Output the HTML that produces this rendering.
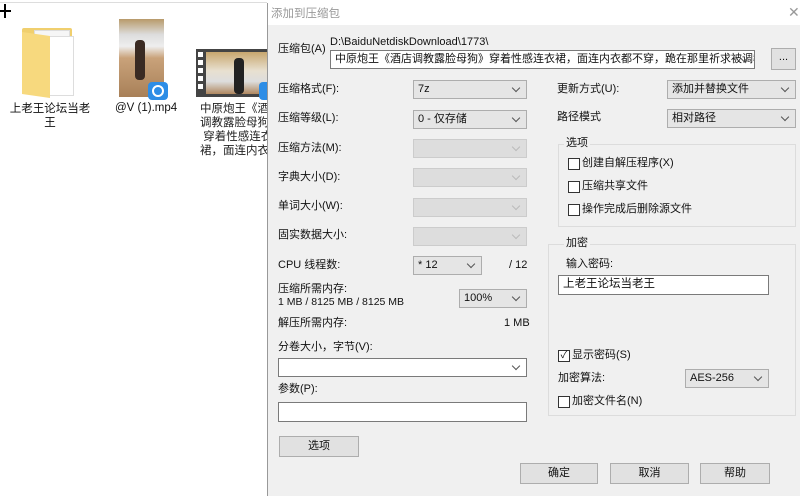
<!DOCTYPE html>
<html><head><meta charset="utf-8"><style>
*{margin:0;padding:0;box-sizing:border-box}
body{width:800px;height:496px;overflow:hidden;background:#fff;position:relative;font-family:"Liberation Sans","Noto Sans CJK SC",sans-serif;font-size:11px;color:#111}
.a{position:absolute;white-space:nowrap;line-height:13px}
.cb{position:absolute;height:19px;border:1px solid #adadad;background:#e5e5e5;padding-left:4px;line-height:13px;padding-top:2px;white-space:nowrap}
.cb.d{background:#ddd;border-color:#ccc}
.cb.w{background:#fff;border-color:#7a7a7a}
.cb::after{content:"";position:absolute;right:7px;top:4px;width:5px;height:5px;border-right:1px solid #555;border-bottom:1px solid #555;transform:rotate(45deg)}
.cb.d::after{border-color:#bbb}
.in{position:absolute;background:#fff;border:1px solid #7a7a7a;height:19px;padding-left:4px;line-height:13px;padding-top:2px}
.bt{position:absolute;background:#e1e1e1;border:1px solid #adadad;text-align:center;line-height:19px;height:21px}
.gb{position:absolute;border:1px solid #dcdcdc}
.gl{position:absolute;background:#f0f0f0;padding:0 2px;line-height:13px}
.ck{position:absolute;width:12px;height:12px;border:1px solid #333;background:#fff}
</style></head><body>
<div class="a" style="left:0;top:2px;width:267px;height:1px;background:#ddd"></div>
<div class="a" style="left:0;top:10px;width:11px;height:2px;background:#000"></div>
<div class="a" style="left:4px;top:4px;width:2px;height:14px;background:#000"></div>
<!-- folder -->
<div class="a" style="left:22px;top:28px;width:50px;height:66px;background:#f0cf6e;border-radius:2px"></div>
<div class="a" style="left:34px;top:30px;width:36px;height:62px;background:#f6f6f6;border:1px solid #ddd"></div>
<div class="a" style="left:44px;top:36px;width:30px;height:60px;background:#fff;border:1px solid #ddd"></div>
<div class="a" style="left:22px;top:34px;width:28px;height:62px;background:#f7d97e;transform:skewY(8deg)"></div>
<div class="a" style="left:8px;top:102px;width:84px;text-align:center;white-space:normal;line-height:14px;font-size:11.5px">上老王论坛当老王</div>
<!-- video1 -->
<div class="a" style="left:119px;top:19px;width:45px;height:78px;background:linear-gradient(#b89a6a 0,#ddd 20%,#eee 35%,#c9a27a 50%,#a88058 100%)"></div>
<div class="a" style="left:135px;top:40px;width:10px;height:40px;background:#3a2a22;border-radius:4px"></div>
<div class="a" style="left:148px;top:82px;width:20px;height:18px;background:#2d8de6;border-radius:4px"></div>
<div class="a" style="left:152px;top:85px;width:12px;height:12px;border:2px solid #fff;border-radius:50%"></div>
<div class="a" style="left:115px;top:102px;font-size:11.5px">@V (1).mp4</div>
<!-- video2 -->
<div class="a" style="left:196px;top:49px;width:71px;height:48px;background:#444"></div>
<div class="a" style="left:206px;top:52px;width:61px;height:42px;background:linear-gradient(#c8a76e,#e8e0d0 45%,#ddd 70%,#b08860)"></div>
<div class="a" style="left:234px;top:58px;width:10px;height:36px;background:#222;border-radius:4px"></div>
<div class="a" style="left:198px;top:52px;width:5px;height:40px;background:repeating-linear-gradient(#fff 0 5px,#444 5px 8px)"></div>
<div class="a" style="left:259px;top:82px;width:10px;height:18px;background:#2d8de6;border-radius:4px 0 0 4px"></div>
<div class="a" style="left:200px;top:102px;width:67px;overflow:hidden;line-height:14px;font-size:11.5px;color:#222">中原炮王《酒店<br>调教露脸母狗》<br>&nbsp;穿着性感连衣<br>裙，面连内衣…</div>
<!-- dialog -->
<div class="a" style="left:267px;top:3px;width:533px;height:493px;background:#f0f0f0;border-left:1px solid #999"></div>
<div class="a" style="left:268px;top:3px;width:532px;height:22px;background:#fff"></div>
<div class="a" style="left:271px;top:8px;color:#999;font-size:11.5px">添加到压缩包</div>
<div class="a" style="left:788px;top:6px;color:#999;font-size:14px">✕</div>
<div class="a" style="left:278px;top:43px">压缩包(A)</div>
<div class="a" style="left:330px;top:36px">D:\BaiduNetdiskDownload\1773\</div>
<div class="cb w" style="left:330px;top:50px;width:425px;overflow:hidden;padding-right:20px">中原炮王《酒店调教露脸母狗》穿着性感连衣裙，面连内衣都不穿，跪在那里祈求被调教</div>
<div class="bt" style="left:771px;top:48px;width:25px;height:22px;line-height:16px">...</div>
<div class="a" style="left:278px;top:83px">压缩格式(F):</div>
<div class="a" style="left:278px;top:112px">压缩等级(L):</div>
<div class="a" style="left:278px;top:142px">压缩方法(M):</div>
<div class="a" style="left:278px;top:171px">字典大小(D):</div>
<div class="a" style="left:278px;top:200px">单词大小(W):</div>
<div class="a" style="left:278px;top:229px">固实数据大小:</div>
<div class="a" style="left:278px;top:259px">CPU 线程数:</div>
<div class="a" style="left:278px;top:283px">压缩所需内存:</div>
<div class="a" style="left:278px;top:296px;font-size:10.5px">1 MB / 8125 MB / 8125 MB</div>
<div class="a" style="left:278px;top:317px">解压所需内存:</div>
<div class="a" style="left:504px;top:317px">1 MB</div>
<div class="a" style="left:278px;top:341px">分卷大小，字节(V):</div>
<div class="a" style="left:278px;top:383px">参数(P):</div>
<div class="cb" style="left:413px;top:80px;width:114px">7z</div>
<div class="cb" style="left:413px;top:110px;width:114px">0 - 仅存储</div>
<div class="cb d" style="left:413px;top:139px;width:114px"></div>
<div class="cb d" style="left:413px;top:168px;width:114px"></div>
<div class="cb d" style="left:413px;top:198px;width:114px"></div>
<div class="cb d" style="left:413px;top:227px;width:114px"></div>
<div class="cb" style="left:413px;top:256px;width:69px">* 12</div>
<div class="a" style="left:509px;top:259px">/ 12</div>
<div class="cb" style="left:459px;top:289px;width:68px">100%</div>
<div class="cb w" style="left:278px;top:358px;width:249px"></div>
<div class="in" style="left:278px;top:402px;width:249px;height:20px"></div>
<div class="bt" style="left:279px;top:436px;width:80px">选项</div>
<div class="a" style="left:557px;top:83px">更新方式(U):</div>
<div class="a" style="left:557px;top:111px">路径模式</div>
<div class="cb" style="left:667px;top:80px;width:129px">添加并替换文件</div>
<div class="cb" style="left:667px;top:109px;width:129px">相对路径</div>
<div class="gb" style="left:558px;top:144px;width:238px;height:83px"></div>
<div class="gl" style="left:564px;top:137px">选项</div>
<div class="ck" style="left:568px;top:158px"></div><div class="a" style="left:582px;top:157px">创建自解压程序(X)</div>
<div class="ck" style="left:568px;top:181px"></div><div class="a" style="left:582px;top:180px">压缩共享文件</div>
<div class="ck" style="left:568px;top:204px"></div><div class="a" style="left:582px;top:203px">操作完成后删除源文件</div>
<div class="gb" style="left:548px;top:244px;width:248px;height:172px"></div>
<div class="gl" style="left:564px;top:237px">加密</div>
<div class="a" style="left:566px;top:258px">输入密码:</div>
<div class="in" style="left:558px;top:275px;width:211px;height:20px;font-size:11.5px">上老王论坛当老王</div>
<div class="ck" style="left:558px;top:350px;font-size:10px;line-height:10px;text-align:center">✓</div><div class="a" style="left:572px;top:349px">显示密码(S)</div>
<div class="a" style="left:558px;top:372px">加密算法:</div>
<div class="cb" style="left:685px;top:369px;width:84px">AES-256</div>
<div class="ck" style="left:558px;top:396px"></div><div class="a" style="left:572px;top:395px">加密文件名(N)</div>
<div class="bt" style="left:520px;top:463px;width:78px">确定</div>
<div class="bt" style="left:610px;top:463px;width:79px">取消</div>
<div class="bt" style="left:700px;top:463px;width:70px">帮助</div>
</body></html>
